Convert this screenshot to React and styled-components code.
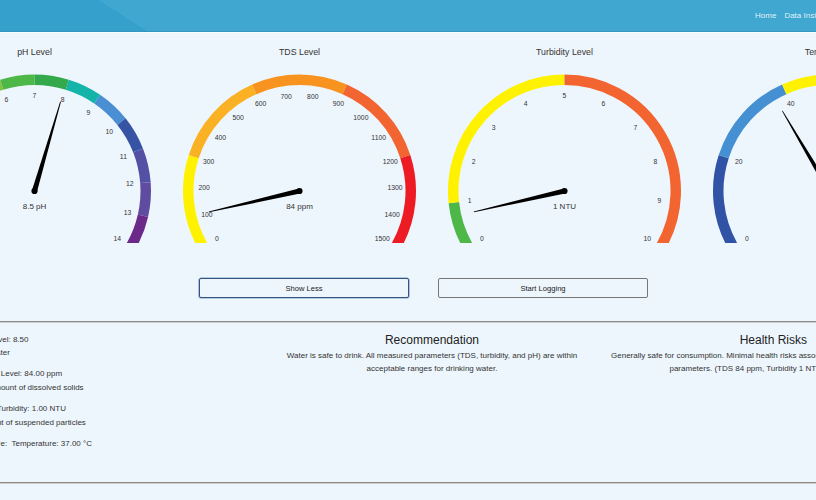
import React from "react"
import styled, { createGlobalStyle } from "styled-components"

const GlobalStyle = createGlobalStyle`
  body {
    margin: 0;
    background: #eef6fd;
    font-family: "Liberation Sans", Arial, sans-serif;
    color: #333;
    overflow: hidden;
  }
`

// the page is wider than the window, the left part is scrolled out of view
const Page = styled.div`
  width: 1060px;
  margin-left: -98px;
`

const Header = styled.header`
  height: 31px;
  display: flex;
  align-items: center;
  justify-content: flex-end;
  padding-right: 66px;
  background: linear-gradient(32.6deg, #36a0cc 0, #36a0cc 132px, #3fa7d0 132px);
  border-bottom: 1px solid #3596c1;
  box-shadow: 0 1px 0 #f7fcff;
`

const NavLink = styled.a`
  color: rgba(255, 255, 255, 0.85);
  font-size: 8px;
  margin-left: 8px;
  text-decoration: none;
`

const GaugeRow = styled.div`
  display: grid;
  grid-template-columns: repeat(4, 265px);
  padding-top: 15px;
`

const GaugeCell = styled.div`
  display: flex;
  flex-direction: column;
  align-items: center;
`

const GaugeTitle = styled.div`
  font-size: 8.8px;
  line-height: 11px;
  color: #333;
`

const GaugeSvg = styled.svg`
  display: block;
  margin-top: 4px;
`

const ButtonRow = styled.div`
  display: flex;
  justify-content: center;
  gap: 29px;
  padding-right: 17px;
  margin-top: 35px;
`

const Button = styled.button`
  width: 210px;
  height: 20px;
  box-sizing: border-box;
  background: transparent;
  border: 1px solid ${(p) => (p.$focused ? "#33557f" : "#767676")};
  box-shadow: ${(p) => (p.$focused ? "0 0 0 0.6px #7d9cc4" : "none")};
  border-radius: 2px;
  font-family: "Liberation Sans", Arial, sans-serif;
  font-size: 7.6px;
  color: #222;
  padding: 0;
`

const Divider = styled.hr`
  margin: ${(p) => p.$top}px 0 0;
  border: 0;
  border-top: 1px solid #8a8a8a;
  border-bottom: 1px solid #cfcfcf;
  height: 0;
`

const Details = styled.div`
  display: grid;
  grid-template-columns: repeat(3, 1fr);
  padding: 9.5px 18px 22.5px;
`

const Column = styled.div`
  padding: 0 7px;
  text-align: ${(p) => p.$align || "center"};
`

const InfoList = styled.div`
  padding-left: 33px;
`

const InfoGroup = styled.div`
  font-size: 8px;
  line-height: 13.3px;
  margin-bottom: 8.4px;
  white-space: pre-wrap;
`

const ColumnTitle = styled.h3`
  margin: 0;
  font-size: 12px;
  line-height: 14px;
  font-weight: normal;
  color: #222;
`

const ColumnText = styled.p`
  margin: 2.5px 0 0;
  font-size: 8px;
  line-height: 13px;
  color: #333;
`

const CX = 132.5
const CY = 129
const RING = 111.25
const LABEL_R = 95.5

const toAngle = (v, min, max) => -120 + (240 * (v - min)) / (max - min)

const point = (deg, r) => {
  const a = (deg * Math.PI) / 180
  return [CX + r * Math.sin(a), CY - r * Math.cos(a)]
}

function arcPath(a0, a1, r) {
  const [x0, y0] = point(a0, r)
  const [x1, y1] = point(a1, r)
  const large = a1 - a0 > 180 ? 1 : 0
  return `M ${x0} ${y0} A ${r} ${r} 0 ${large} 1 ${x1} ${y1}`
}

function needlePath(deg) {
  const a = (deg * Math.PI) / 180
  const dx = Math.sin(a)
  const dy = -Math.cos(a)
  const nx = Math.cos(a)
  const ny = Math.sin(a)
  const tx = CX + dx * 93
  const ty = CY + dy * 93
  return `M ${CX + nx * 2.6} ${CY + ny * 2.6} L ${tx + nx * 0.4} ${ty + ny * 0.4} L ${tx - nx * 0.4} ${ty - ny * 0.4} L ${CX - nx * 2.6} ${CY - ny * 2.6} Z`
}

function Gauge({ title, min, max, step, needle, readout, segments }) {
  const ticks = []
  for (let v = min; v <= max; v += step) ticks.push(v)

  return (
    <GaugeCell>
      <GaugeTitle>{title}</GaugeTitle>
      <GaugeSvg width="265" height="181" viewBox="0 0 265 181">
        {segments.map((s, i) => (
          <path
            key={i}
            d={arcPath(toAngle(s.from, min, max), toAngle(s.to, min, max), RING)}
            stroke={s.color}
            strokeWidth="10.5"
            fill="none"
          />
        ))}
        {ticks.map((t) => {
          const [x, y] = point(toAngle(t, min, max), LABEL_R)
          return (
            <text key={t} x={x} y={y} fontSize="6.8" fill="#333" textAnchor="middle" dominantBaseline="central">
              {t}
            </text>
          )
        })}
        <path d={needlePath(toAngle(needle, min, max))} fill="#000" />
        <circle cx={CX} cy={CY} r="3.1" fill="#000" />
        <text x={CX} y={CY + 15} fontSize="8" fill="#333" textAnchor="middle" dominantBaseline="central">
          {readout}
        </text>
      </GaugeSvg>
    </GaugeCell>
  )
}

const gauges = [
  {
    title: "pH Level",
    min: 0,
    max: 14,
    step: 1,
    needle: 7.95,
    readout: "8.5 pH",
    segments: [
      { from: 0, to: 1, color: "#ee1c25" },
      { from: 1, to: 2, color: "#f26724" },
      { from: 2, to: 3, color: "#f8c611" },
      { from: 3, to: 4, color: "#f5ed1c" },
      { from: 4, to: 5, color: "#b5d333" },
      { from: 5, to: 6, color: "#84c341" },
      { from: 6, to: 7, color: "#4db748" },
      { from: 7, to: 8, color: "#33a94b" },
      { from: 8, to: 9, color: "#14b4a8" },
      { from: 9, to: 10, color: "#4a8fd3" },
      { from: 10, to: 11, color: "#3753a4" },
      { from: 11, to: 12, color: "#5251a3" },
      { from: 12, to: 13, color: "#5f4b9f" },
      { from: 13, to: 14, color: "#6b2a89" },
    ],
  },
  {
    title: "TDS Level",
    min: 0,
    max: 1500,
    step: 100,
    needle: 106,
    readout: "84 ppm",
    segments: [
      { from: 0, to: 300, color: "#fff200" },
      { from: 300, to: 600, color: "#fbb124" },
      { from: 600, to: 900, color: "#f7931e" },
      { from: 900, to: 1200, color: "#f26531" },
      { from: 1200, to: 1500, color: "#ed1c24" },
    ],
  },
  {
    title: "Turbidity Level",
    min: 0,
    max: 10,
    step: 1,
    needle: 0.71,
    readout: "1 NTU",
    segments: [
      { from: 0, to: 1, color: "#4db848" },
      { from: 1, to: 5, color: "#fff200" },
      { from: 5, to: 10, color: "#f26531" },
    ],
  },
  {
    title: "Temperature",
    min: 0,
    max: 100,
    step: 20,
    needle: 37.3,
    readout: "37 °C",
    segments: [
      { from: 0, to: 20, color: "#3153a5" },
      { from: 20, to: 40, color: "#4590d3" },
      { from: 40, to: 60, color: "#fff200" },
      { from: 60, to: 80, color: "#f7931e" },
      { from: 80, to: 100, color: "#ed1c24" },
    ],
  },
]

const readings = [
  ["pH:  pH Level: 8.50", "Alkaline water"],
  ["TDS:  TDS Level: 84.00 ppm", "Minimal amount of dissolved solids"],
  ["Turbidity:  Turbidity: 1.00 NTU", "Low amount of suspended particles"],
  ["Temperature:  Temperature: 37.00 °C"],
]

export default function App() {
  return (
    <>
      <GlobalStyle />
      <Page>
        <Header>
          <NavLink href="#">Home</NavLink>
          <NavLink href="#">Data Insights</NavLink>
          <NavLink href="#">Reports</NavLink>
          <NavLink href="#">About</NavLink>
        </Header>

        <GaugeRow>
          {gauges.map((g) => (
            <Gauge key={g.title} {...g} />
          ))}
        </GaugeRow>

        <ButtonRow>
          <Button $focused>Show Less</Button>
          <Button>Start Logging</Button>
        </ButtonRow>

        <Divider $top={23} />

        <Details>
          <Column $align="left">
            <InfoList>
              {readings.map((lines, i) => (
                <InfoGroup key={i}>{lines.join("\n")}</InfoGroup>
              ))}
            </InfoList>
          </Column>
          <Column>
            <ColumnTitle>Recommendation</ColumnTitle>
            <ColumnText>
              Water is safe to drink. All measured parameters (TDS, turbidity, and pH) are within acceptable ranges for
              drinking water.
            </ColumnText>
          </Column>
          <Column>
            <ColumnTitle>Health Risks</ColumnTitle>
            <ColumnText>
              Generally safe for consumption. Minimal health risks associated with observed water quality parameters.
              (TDS 84 ppm, Turbidity 1 NTU, pH 8.5, 37 °C)
            </ColumnText>
          </Column>
        </Details>

        <Divider $top={0} />
      </Page>
    </>
  )
}
